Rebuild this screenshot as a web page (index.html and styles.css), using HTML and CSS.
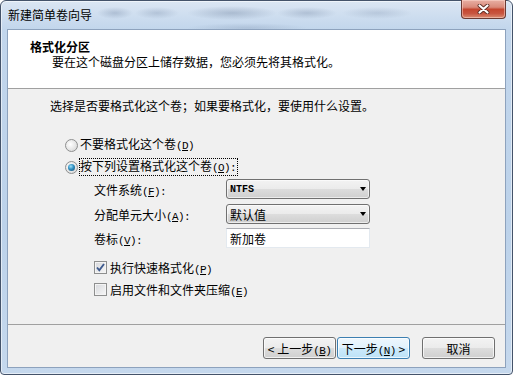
FILE: index.html
```html
<!DOCTYPE html>
<html lang="zh-CN">
<head>
  <meta charset="UTF-8">
  <meta name="viewport" content="width=device-width, initial-scale=1.0">
  <title>新建简单卷向导</title>
  <link rel="stylesheet" href="styles.css">
</head>
<body>
  <div class="window">
    <div class="titlebar">
      <span class="title">新建简单卷向导</span>
      <button class="close" title="关闭">
        <svg width="13" height="10" viewBox="0 0 13 10">
          <path d="M2.5 1.5 L10.5 8.5 M10.5 1.5 L2.5 8.5" stroke="#5a2a22" stroke-width="3.8" stroke-linecap="round"/>
          <path d="M2.5 1.5 L10.5 8.5 M10.5 1.5 L2.5 8.5" stroke="#fff" stroke-width="2.2" stroke-linecap="round"/>
        </svg>
      </button>
    </div>

    <div class="client">
      <div class="header">
        <div class="header-title">格式化分区</div>
        <div class="header-sub">要在这个磁盘分区上储存数据，您必须先将其格式化。</div>
      </div>

      <div class="page">
        <p class="intro">选择是否要格式化这个卷；如果要格式化，要使用什么设置。</p>

        <div class="options">
          <div class="radio-row">
            <span class="radio"></span>
            <span class="radio-label">不要格式化这个卷<span class="key">(<u>D</u>)</span></span>
          </div>
          <div class="radio-row">
            <span class="radio checked"></span>
            <span class="radio-label focus">按下列设置格式化这个卷<span class="key">(<u>O</u>):</span></span>
          </div>
        </div>

        <div class="settings">
          <span class="field-label">文件系统<span class="key">(<u>F</u>):</span></span>
          <div class="combo"><span class="mono">NTFS</span><span class="arrow"></span></div>

          <span class="field-label">分配单元大小<span class="key">(<u>A</u>):</span></span>
          <div class="combo"><span>默认值</span><span class="arrow"></span></div>

          <span class="field-label">卷标<span class="key">(<u>V</u>):</span></span>
          <div class="textbox">新加卷</div>
        </div>

        <div class="checks">
          <div class="check-row">
            <span class="check">
              <svg width="11" height="11" viewBox="0 0 11 11">
                <path d="M2 5.5 L4.3 8.3 L9 2" fill="none" stroke="#3e5a8e" stroke-width="1.9"/>
              </svg>
            </span>
            <span>执行快速格式化<span class="key">(<u>P</u>)</span></span>
          </div>
          <div class="check-row">
            <span class="check"></span>
            <span>启用文件和文件夹压缩<span class="key">(<u>E</u>)</span></span>
          </div>
        </div>

        <div class="footer">
          <button class="btn">&lt; 上一步<span class="key">(<u>B</u>)</span></button>
          <button class="btn default">下一步<span class="key">(<u>N</u>)</span> &gt;</button>
          <button class="btn cancel">取消</button>
        </div>
      </div>
    </div>
  </div>
</body>
</html>
```

FILE: styles.css
```css
body {
  margin: 0;
  background-color: #ffffff;
  font-family: 'Noto Sans CJK SC', 'Noto Sans', sans-serif;
  font-size: 12px;
  color: #000;
}

.window {
  width: 513px;
  height: 375px;
  box-sizing: border-box;
  border: 1px solid #44536a;
  border-radius: 6px 6px 4px 4px;
  padding: 0 6px 6px;
  background: linear-gradient(#dbe6f3, #c2d6ec 28px, #bcd2ea 60%, #c5d8ed);
  box-shadow: inset 0 0 0 1px rgba(255, 255, 255, 0.55);
  display: flex;
  flex-direction: column;
}

/* blurred glass behind the caption */
.titlebar {
  height: 28px;
  display: flex;
  align-items: flex-start;
  background:
    radial-gradient(ellipse 18px 6px at 108px 12px, rgba(110, 130, 160, 0.35), transparent),
    radial-gradient(ellipse 22px 6px at 150px 12px, rgba(110, 130, 160, 0.3), transparent),
    radial-gradient(ellipse 45px 7px at 225px 12px, rgba(100, 120, 150, 0.35), transparent),
    radial-gradient(ellipse 30px 6px at 300px 12px, rgba(100, 120, 150, 0.3), transparent),
    radial-gradient(ellipse 35px 6px at 370px 12px, rgba(110, 130, 160, 0.25), transparent),
    radial-gradient(ellipse 60px 5px at 240px 27px, rgba(110, 130, 160, 0.25), transparent);
}
.title {
  padding: 7px 0 0 1px;
  line-height: 14px;
}
.close {
  margin: -1px 0 0 auto;
  width: 45px;
  height: 19px;
  padding: 0;
  border: 1px solid #6a3a33;
  border-top: none;
  border-radius: 0 0 4px 4px;
  background: linear-gradient(#e8b0a4, #d98a7a 40%, #c4462f 52%, #c85540 75%, #d98c72);
  box-shadow: inset 0 0 0 1px rgba(255, 220, 210, 0.5);
  display: flex;
  align-items: center;
  justify-content: center;
}

.client {
  flex: 1;
  border: 1px solid #8da2bd;
  background-color: #f0f0f0;
  display: flex;
  flex-direction: column;
}

.header {
  height: 59px;
  box-sizing: border-box;
  background-color: #ffffff;
  border-bottom: 1px solid #a0a0a0;
  padding: 9px 0 0 22px;
  line-height: 15px;
}
.header-title {
  font-weight: bold;
}
.header-sub {
  padding-left: 22px;
}

.page {
  flex: 1;
  display: flex;
  flex-direction: column;
}
.intro {
  margin: 10px 0 0 42px;
  line-height: 14px;
}

.options {
  margin: 21px 0 0 57px;
}
.radio-row {
  height: 22px;
  display: flex;
  align-items: center;
  gap: 2px;
}
.radio {
  width: 13px;
  height: 13px;
  box-sizing: border-box;
  border: 1px solid #8e8f8f;
  border-radius: 50%;
  background: radial-gradient(circle at 40% 40%, #ffffff, #e6e6e6 55%, #cfcfcf);
  display: flex;
  align-items: center;
  justify-content: center;
}
.radio.checked::after {
  content: '';
  width: 7px;
  height: 7px;
  border-radius: 50%;
  background: radial-gradient(circle at 40% 35%, #9fe0f8 0, #2f8fc2 45%, #1b4866 100%);
}
.radio-label {
  line-height: 14px;
}
.focus {
  margin-left: -1px;
  border: 1px dotted #000;
  padding-right: 1px;
}

.key {
  font-family: 'Liberation Mono', monospace;
  font-size: 11px;
  letter-spacing: -0.6px;
}
.mono {
  font-family: 'Liberation Mono', monospace;
  font-size: 10px;
  font-weight: bold;
}

.settings {
  margin: 1px 0 0 86px;
  display: grid;
  grid-template-columns: 132px 144px;
  row-gap: 5px;
  align-items: center;
}
.combo {
  height: 20px;
  box-sizing: border-box;
  border: 1px solid #707070;
  border-radius: 3px;
  background: linear-gradient(#f3f3f3, #ebebeb 50%, #dddddd 50%, #cfcfcf);
  box-shadow: inset 0 0 0 1px rgba(255, 255, 255, 0.6);
  padding-left: 3px;
  display: flex;
  align-items: center;
}
.arrow {
  margin: 0 3px 0 auto;
  width: 0;
  height: 0;
  border-top: 4px solid #000;
  border-left: 3.5px solid transparent;
  border-right: 3.5px solid transparent;
}
.textbox {
  margin-top: -1px;
  height: 20px;
  box-sizing: border-box;
  border: 1px solid #e3e9ef;
  border-top-color: #abadb3;
  background-color: #ffffff;
  padding-left: 3px;
  display: flex;
  align-items: center;
}

.checks {
  margin: 8px 0 0 86px;
}
.check-row {
  height: 22px;
  display: flex;
  align-items: center;
  gap: 3px;
}
.check {
  width: 13px;
  height: 13px;
  box-sizing: border-box;
  border: 1px solid #8e8f8f;
  background: linear-gradient(135deg, #d6d8dc, #f7f7f7);
  box-shadow: inset 0 0 0 1px #f4f4f4;
  display: flex;
  align-items: center;
  justify-content: center;
}

.footer {
  margin-top: auto;
  border-top: 1px solid #a0a0a0;
  padding: 12px 10px 8px 0;
  display: flex;
  justify-content: flex-end;
  gap: 1px;
}
.btn {
  width: 73px;
  height: 22px;
  padding: 0;
  border: 1px solid #707070;
  border-radius: 3px;
  background: linear-gradient(#f3f3f3, #ebebeb 50%, #dddddd 50%, #cfcfcf);
  box-shadow: inset 0 0 0 1px rgba(255, 255, 255, 0.7);
  font: inherit;
  color: #000;
}
.btn.default {
  border-color: #3c7fb1;
  background: linear-gradient(#eef7fd, #e0f2fc 50%, #cdeafb 50%, #bde2f7);
}
.btn.cancel {
  margin-left: 11px;
}
```
